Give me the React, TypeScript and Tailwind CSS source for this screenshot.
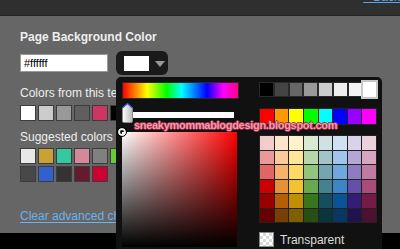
import React from "react";

const fromThis = ["#ffffff", "#cccccc", "#999999", "#5f5f5f", "#cc3663", "#000000"];
const suggested1 = ["#e8e8e8", "#c9a135", "#35c9a0", "#d4889a", "#808080", "#66cc33"];
const suggested2 = ["#484848", "#3360cc", "#333333", "#661a2e", "#cc0033"];

const grays = ["#000000", "#444444", "#666666", "#999999", "#cccccc", "#eeeeee", "#f3f3f3", "#ffffff"];
const brights = ["#ff0000", "#ff9900", "#ffff00", "#00ff00", "#00ffff", "#0000ff", "#9900ff", "#ff00ff"];
const pastel = [
  ["#f4cccc", "#fce5cd", "#fff2cc", "#d9ead3", "#d0e0e3", "#cfe2f3", "#d9d2e9", "#ead1dc"],
  ["#ea9999", "#f9cb9c", "#ffe599", "#b6d7a8", "#a2c4c9", "#9fc5e8", "#b4a7d6", "#d5a6bd"],
  ["#e06666", "#f6b26b", "#ffd966", "#93c47d", "#76a5af", "#6fa8dc", "#8e7cc3", "#c27ba0"],
  ["#cc0000", "#e69138", "#f1c232", "#6aa84f", "#45818e", "#3d85c6", "#674ea7", "#a64d79"],
  ["#990000", "#b45f06", "#bf9000", "#38761d", "#134f5c", "#0b5394", "#351c75", "#741b47"],
  ["#660000", "#783f04", "#7f6000", "#274e13", "#0c343d", "#073763", "#20124d", "#4c1130"],
];

function Swatch({ c }: { c: string }) {
  return (
    <div
      className="w-[16px] h-[16px] shrink-0 border border-[#3c3c3c]"
      style={{ backgroundColor: c }}
    />
  );
}

export default function App() {
  return (
    <div
      className="relative w-[400px] h-[249px] overflow-hidden bg-black"
      style={{ fontFamily: '"Liberation Sans", Arial, sans-serif' }}
    >
      {/* top bar */}
      <div className="h-[16px] bg-[#2f2f2f] border-b border-[#262626] flex justify-end overflow-hidden">
        <a className="mr-[-58px] -mt-[10px] text-[12px] leading-[14px] text-[#5aa6ea] underline whitespace-nowrap">
          <span className="text-[#2a4d80]">«</span> Back to Blogger
        </a>
      </div>

      {/* main panel */}
      <div className="h-[217px] bg-[#666666] pl-[20px] pt-[14px] text-[#eeeeee]">
        <div className="text-[12px] font-bold leading-[14px]">Page Background Color</div>
        <div className="mt-[7px] flex items-center">
          <div className="w-[88px] h-[18px] bg-white border border-[#999] pl-[3px] text-[11px] leading-[16px] text-black">
            #ffffff
          </div>
          <div className="ml-[8px] w-[52px] h-[24px] bg-[#1a1a1a] rounded-[6px] flex items-center pl-[8px]">
            <div className="w-[25px] h-[15px] bg-white" />
            <svg width="10" height="6" viewBox="0 0 10 6" className="ml-[6px] mt-[1px]">
              <path d="M0 0 L10 0 L5 6 Z" fill="#999999" />
            </svg>
          </div>
        </div>
        <div className="mt-[11px] text-[12px] leading-[14px]">Colors from this template</div>
        <div className="mt-[5px] flex gap-[2px]">
          {fromThis.map((c, i) => (
            <Swatch key={i} c={c} />
          ))}
        </div>
        <div className="mt-[9px] text-[12px] leading-[14px]">Suggested colors</div>
        <div className="mt-[4px] flex gap-[2px]">
          {suggested1.map((c, i) => (
            <Swatch key={i} c={c} />
          ))}
        </div>
        <div className="mt-[2px] flex gap-[2px]">
          {suggested2.map((c, i) => (
            <Swatch key={i} c={c} />
          ))}
        </div>
        <div className="mt-[27px] text-[12px] leading-[14px] text-[#6cb2ec] underline underline-offset-2">
          Clear advanced changes
        </div>
      </div>

      {/* color picker popup */}
      <div className="absolute left-[116px] top-[77px] w-[266px] h-[190px] bg-[#111111] rounded-[5px] flex pt-[5px] pl-[6px]">
        <div className="w-[117px] flex flex-col">
          <div
            className="h-[17px] border border-[#2a2a2a]"
            style={{
              background:
                "linear-gradient(to right, #ff0000 0%, #ffff00 21%, #00ff00 38%, #00ffff 51%, #0000ff 73%, #ff00ff 87%, #ff0088 100%)",
            }}
          />
          <div className="relative h-[33px]">
            <div className="absolute left-[9px] top-[13px] w-[103px] h-[6px] bg-white" />
            <svg
              width="11"
              height="20"
              viewBox="0 0 11 20"
              className="absolute left-0 top-[4px]"
            >
              <defs>
                <linearGradient id="th" x1="0" y1="0" x2="1" y2="0">
                  <stop offset="0" stopColor="#ffffff" />
                  <stop offset="1" stopColor="#b8b8b8" />
                </linearGradient>
              </defs>
              <path d="M5.5 0.5 L10.5 5 L10.5 18 Q10.5 19.5 9 19.5 L2 19.5 Q0.5 19.5 0.5 18 L0.5 5 Z" fill="url(#th)" stroke="#8a8a8a" />
              <path d="M0.5 5 L5.5 0.5 L10.5 5" fill="none" stroke="#3355ee" strokeWidth="1.2" />
            </svg>
          </div>
          <div className="relative">
            <div
              className="w-[115px] h-[115px]"
              style={{
                background:
                  "linear-gradient(to top, #000000, rgba(0,0,0,0)), linear-gradient(to right, #ffffff, #ff0000)",
              }}
            />
            <div className="absolute -left-[4px] -top-[4px] w-[8px] h-[8px] rounded-full border-2 border-[#f0f0f0] outline outline-1 outline-black" />
          </div>
        </div>

        <div className="ml-[20px] w-[118px] flex flex-col">
          <div className="grid grid-cols-8 h-[15px]">
            {grays.map((c, i) =>
              i === 7 ? (
                <div key={i} className="relative">
                  <div
                    className="absolute -left-[1px] -top-[2px] -right-[1px] -bottom-[2px] border-2 border-[#c8c8c8]"
                    style={{ backgroundColor: c }}
                  />
                </div>
              ) : (
                <div key={i} className="border border-[#2a2a2a]" style={{ backgroundColor: c }} />
              )
            )}
          </div>
          <div className="mt-[11px] grid grid-cols-8 gap-px bg-[#222] border border-[#222] h-[17px]">
            {brights.map((c, i) => (
              <div key={i} style={{ backgroundColor: c }} />
            ))}
          </div>
          <div className="mt-[10px] grid grid-cols-8 grid-rows-6 gap-px bg-[#222] border border-[#222] h-[88px]">
            {pastel.flat().map((c, i) => (
              <div key={i} style={{ backgroundColor: c }} />
            ))}
          </div>
          <div className="mt-[9px] flex items-center">
            <div
              className="w-[15px] h-[15px] border border-[#888]"
              style={{
                backgroundColor: "#ffffff",
                backgroundImage:
                  "linear-gradient(45deg, #d8d8d8 25%, transparent 25%, transparent 75%, #d8d8d8 75%), linear-gradient(45deg, #d8d8d8 25%, transparent 25%, transparent 75%, #d8d8d8 75%)",
                backgroundSize: "6px 6px",
                backgroundPosition: "0 0, 3px 3px",
              }}
            />
            <span className="ml-[6px] text-[12px] leading-[14px] text-[#dddddd]">Transparent</span>
          </div>
        </div>
      </div>

      {/* watermark */}
      <div
        className="absolute left-[134px] top-[118px] text-[11px] font-bold leading-[14px] tracking-[-0.3px] text-[#f59aae] whitespace-nowrap"
        style={{
          textShadow:
            "1px 0 0 #a0304a, -1px 0 0 #a0304a, 0 1px 0 #a0304a, 0 -1px 0 #a0304a",
        }}
      >
        sneakymommablogdesign.blogspot.com
      </div>
    </div>
  );
}
